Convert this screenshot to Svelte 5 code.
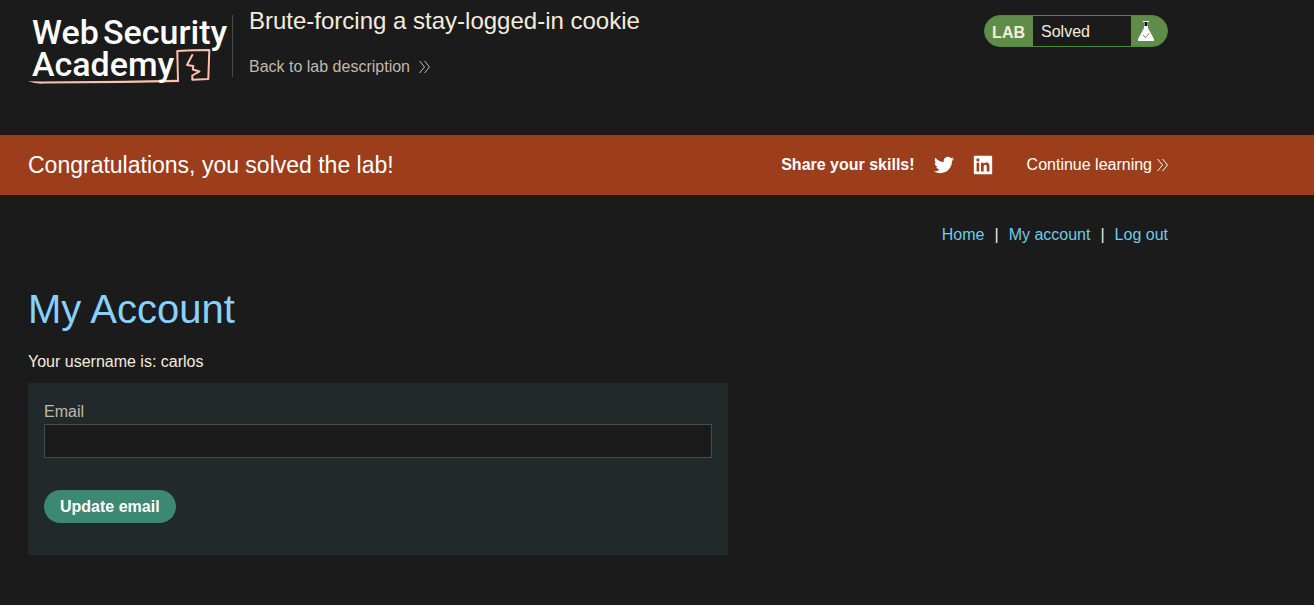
<script>
	let email = $state('');

	const links = ['Home', 'My account', 'Log out'];

	function updateEmail(e) {
		e.preventDefault();
		console.log('update', email);
	}
</script>

{#snippet chevrons()}
	<svg class="chevrons" viewBox="0 0 11 14" aria-hidden="true">
		<path d="M.5 1 5.5 7 .5 13M5.500 1l5 6-5 6" />
	</svg>
{/snippet}

<header class="lab-header">
	<div class="container header-row">
		<a class="logo" href="#academy" aria-label="Web Security Academy">
			<svg viewBox="0 0 204 76" aria-hidden="true">
				<path class="line" d="M0 66.3Q8 69 15 68.6L95 68 151 67V64.7L95 65.7 15 66.5Z" />
				<path
					class="frame"
					d="M150 66 149.3 36 165 35.3 181.3 35 180.8 50 180.3 64 164.3 64.7V60.5L171.5 56.5 164.8 54.5 165.3 51 159 50 164.7 39.3"
				/>
				<text x="4" y="29">Web</text>
				<text x="75" y="29">Security</text>
				<text x="4" y="61">Academy</text>
			</svg>
		</a>
		<div class="title">
			<h2>Brute-forcing a stay-logged-in cookie</h2>
			<a class="back" href="#description">Back to lab description {@render chevrons()}</a>
		</div>
		<div class="status">
			<span class="status-tag">LAB</span>
			<span class="status-text">Solved</span>
			<span class="status-icon">
				<svg viewBox="0 0 18 22" aria-hidden="true">
					<path class="flask" d="M6 1h6v1h-1v6l6 11v2H1v-2L7 8V2H6z" />
					<path class="neck" d="M7.5 2h3v4h-3z" />
					<path class="tick" d="m6 15 2.500 2.500L12.500 13" />
				</svg>
			</span>
		</div>
	</div>
</header>

<section class="banner">
	<div class="container banner-row">
		<h4>Congratulations, you solved the lab!</h4>
		<div class="share">
			<span>Share your skills!</span>
			<a href="#twitter" aria-label="Share on Twitter">
				<svg viewBox="0 0 24 24" aria-hidden="true">
					<path
						d="M23.95 4.57a10 10 0 0 1-2.82.77 4.96 4.96 0 0 0 2.16-2.72c-.95.55-2 .95-3.13 1.18a4.92 4.92 0 0 0-8.38 4.48C7.69 8.1 4.07 6.13 1.64 3.16a4.92 4.92 0 0 0 1.52 6.57 4.9 4.9 0 0 1-2.23-.61v.06a4.93 4.93 0 0 0 3.95 4.83 5 5 0 0 1-2.21.08 4.94 4.94 0 0 0 4.6 3.42A9.87 9.87 0 0 1 0 19.54a13.99 13.99 0 0 0 7.55 2.21c9.05 0 14-7.5 14-13.98 0-.21 0-.42-.02-.63a9.94 9.94 0 0 0 2.46-2.55z"
					/>
				</svg>
			</a>
			<a href="#linkedin" aria-label="Share on LinkedIn">
				<svg viewBox="0 0 24 24" aria-hidden="true">
					<path
						d="M22.2 1H1.8C1.3 1 1 1.4 1 1.8v20.4c0 .4.3.8.8.8h20.4c.5 0 .8-.4.8-.8V1.8c0-.4-.3-.8-.8-.8zM7.5 19.7H4.3V9.2h3.2v10.5zM5.9 7.8a1.9 1.9 0 1 1 0-3.8 1.9 1.9 0 0 1 0 3.8zM19.7 19.7h-3.2v-5.1c0-1.2 0-2.8-1.7-2.8s-2 1.3-2 2.7v5.2H9.6V9.2h3.1v1.4c.4-.8 1.5-1.7 3.1-1.7 3.3 0 3.9 2.2 3.9 5z"
					/>
				</svg>
			</a>
		</div>
		<a class="continue" href="#learning">Continue learning {@render chevrons()}</a>
	</div>
</section>

<main class="container">
	<nav>
		{#each links as link, i}
			{#if i > 0}<span>|</span>{/if}
			<a href="#{link}">{link}</a>
		{/each}
	</nav>

	<h1>My Account</h1>
	<p>Your username is: carlos</p>

	<form onsubmit={updateEmail}>
		<label for="email">Email</label>
		<input id="email" type="email" bind:value={email} />
		<button type="submit">Update email</button>
	</form>
</main>

<style>
	:global(body) {
		background: #1b1b1b;
		color: #f6ecdc;
		font: 16px/20px 'Liberation Sans', Arial, sans-serif;
	}

	* {
		box-sizing: border-box;
	}

	h1,
	h2,
	h4,
	p {
		margin: 0;
		font-weight: 400;
	}

	a {
		color: inherit;
		text-decoration: none;
	}

	.container {
		max-width: 1196px;
		padding: 0 28px;
	}

	.chevrons {
		width: 11px;
		height: 14px;
		fill: none;
		stroke: currentColor;
	}

	.header-row {
		display: flex;
		align-items: flex-start;
		padding-top: 15px;
		padding-bottom: 44px;
	}

	.logo svg {
		display: block;
		width: 204px;
		height: 76px;
		overflow: visible;
	}

	.logo text {
		fill: #fff;
		font-family: Roboto, sans-serif;
		font-size: 34px;
		font-weight: 500;
	}

	.line {
		fill: #ffc1ac;
	}

	.frame {
		fill: none;
		stroke: #ffc1ac;
		stroke-width: 2;
		stroke-linejoin: round;
	}

	.title {
		flex: 1;
		height: 62px;
		padding-left: 16px;
		border-left: 1px solid #4b4b4b;
	}

	.title h2 {
		margin-top: -8px;
		font-size: 24px;
		line-height: 28px;
	}

	.back {
		display: flex;
		align-items: center;
		gap: 9px;
		margin-top: 22px;
		color: #c3b9aa;
	}

	.status {
		display: flex;
		height: 32px;
		border: 1px solid #4f8a3f;
		border-radius: 16px;
		background: #5f8c48;
		line-height: 32px;
		overflow: hidden;
	}

	.status-tag {
		padding: 1px 8px 0 7px;
		font-weight: 700;
	}

	.status-text {
		width: 98px;
		padding-left: 8px;
		background: #1b1b1b;
	}

	.status-icon {
		padding: 4px 12px 0 6px;
	}

	.status-icon svg {
		display: block;
		width: 18px;
		height: 22px;
	}

	.flask {
		fill: #fff;
	}

	.neck {
		fill: #111;
	}

	.tick {
		fill: none;
		stroke: #777;
	}

	.banner {
		background: #9c3d1c;
		color: #fff;
	}

	.banner-row {
		display: flex;
		align-items: center;
		min-height: 60px;
	}

	.banner h4 {
		flex: 1;
		font-size: 23px;
		line-height: 28px;
	}

	.share {
		display: flex;
		align-items: center;
		gap: 19px;
		margin-right: 34px;
		font-weight: 700;
	}

	.share svg {
		display: block;
		width: 20px;
		height: 20px;
		fill: #fff;
	}

	.continue {
		display: flex;
		align-items: center;
		gap: 5px;
	}

	nav {
		display: flex;
		justify-content: flex-end;
		gap: 10px;
		padding: 30px 0 40px;
	}

	nav a {
		color: #6fcbe8;
	}

	h1 {
		color: #88d1ff;
		font-size: 40px;
		line-height: 48px;
	}

	p {
		margin: 19px 0 11px;
	}

	form {
		display: flex;
		flex-direction: column;
		align-items: flex-start;
		max-width: 700px;
		padding: 19px 16px 32px;
		background: #22292a;
	}

	label {
		margin-bottom: 2px;
		color: #c3b9aa;
	}

	input {
		width: 100%;
		height: 34px;
		margin-bottom: 32px;
		padding: 4px 8px;
		border: 1px solid #4b4b4b;
		background: #1b1b1b;
		color: inherit;
		font: inherit;
	}

	button {
		height: 33px;
		padding: 0 16px;
		border: 0;
		border-radius: 17px;
		background: #3d8871;
		color: #fff;
		font: inherit;
		font-weight: 700;
		cursor: pointer;
	}
</style>
